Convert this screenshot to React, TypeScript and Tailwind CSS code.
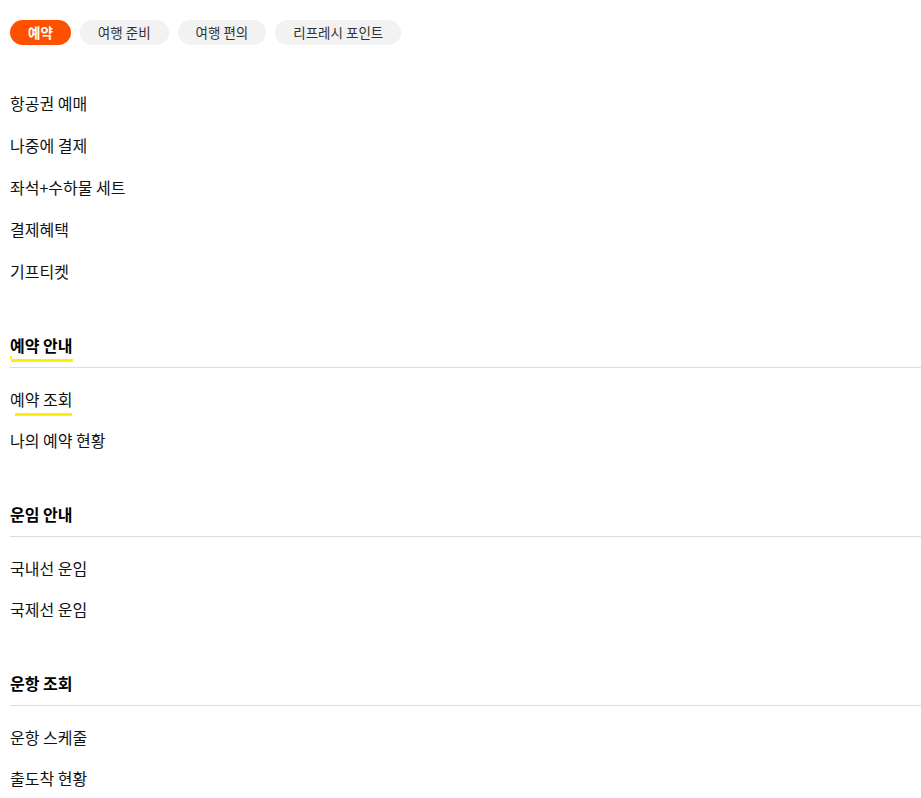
import React from "react";

const font = { fontFamily: '"Noto Sans CJK KR", "Noto Sans", sans-serif' };

function Item({ label, h = "h-[41px]", underline = false }: { label: string; h?: string; underline?: boolean }) {
  return (
    <div className={`${h} flex items-center`}>
      <span className="relative text-[16px] text-[#111] leading-none">
        {label}
        {underline && <span className="absolute left-[5px] right-0 top-[22px] h-[3px] bg-[#fff000]" />}
      </span>
    </div>
  );
}

function Header({ label, underline = false }: { label: string; underline?: boolean }) {
  return (
    <div className="h-[45px] border-b border-[#dddddd] flex items-center">
      <span className="relative text-[16px] font-bold text-black leading-none">
        {label}
        {underline && (
          <>
            <span className="absolute left-[1px] right-0 top-[22px] h-[3px] bg-[#fff000]" />
            <span className="absolute left-0 top-[19px] w-[2px] h-[3px] bg-[#fff000]" />
          </>
        )}
      </span>
    </div>
  );
}

export default function App() {
  return (
    <div className="bg-white min-h-[798px] pl-[10px] pt-[20px]" style={font}>
      <div className="flex gap-[9px]">
        <div className="h-[25px] px-[18px] rounded-full bg-[#ff5000] text-white text-[13.5px] font-bold flex items-center">예약</div>
        <div className="h-[25px] px-[18px] rounded-full bg-[#f2f2f2] text-[#333] text-[13.5px] flex items-center">여행 준비</div>
        <div className="h-[25px] px-[18px] rounded-full bg-[#f2f2f2] text-[#333] text-[13.5px] flex items-center">여행 편의</div>
        <div className="h-[25px] px-[18px] rounded-full bg-[#f2f2f2] text-[#333] text-[13.5px] flex items-center">리프레시 포인트</div>
      </div>

      <div className="mt-[37px]">
        <Item h="h-[42px]" label="항공권 예매" />
        <Item h="h-[42px]" label="나중에 결제" />
        <Item h="h-[42px]" label="좌석+수하물 세트" />
        <Item h="h-[42px]" label="결제혜택" />
        <Item h="h-[42px]" label="기프티켓" />
      </div>

      <div className="mt-[31px]">
        <Header label="예약 안내" underline />
        <div className="mt-[10px]">
          <Item label="예약 조회" underline />
          <Item label="나의 예약 현황" />
        </div>
      </div>

      <div className="mt-[32px]">
        <Header label="운임 안내" />
        <div className="mt-[10px]">
          <Item label="국내선 운임" />
          <Item label="국제선 운임" />
        </div>
      </div>

      <div className="mt-[32px]">
        <Header label="운항 조회" />
        <div className="mt-[10px]">
          <Item label="운항 스케줄" />
          <Item label="출도착 현황" />
        </div>
      </div>
    </div>
  );
}
